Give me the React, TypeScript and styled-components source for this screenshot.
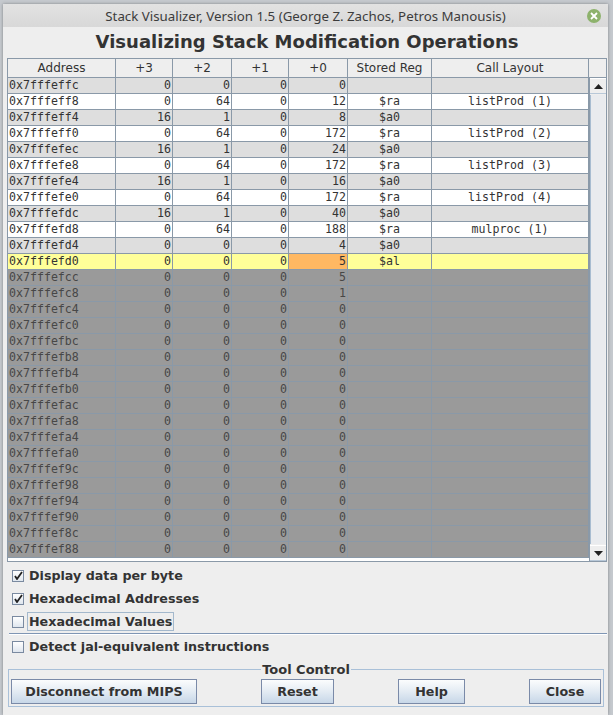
import React, { FC } from "react";
import styled, { createGlobalStyle, css } from "styled-components";

const GlobalStyle = createGlobalStyle`
  html, body {
    margin: 0;
    padding: 0;
    background: #c5c9ce;
    font-family: "DejaVu Sans", sans-serif;
  }
`;

type RowKind = "light" | "white" | "current" | "free";

interface StackRow {
  addr: string;
  bytes: number[];
  reg: string;
  call: string;
  kind: RowKind;
}

const filled: [number[], string, string][] = [
  [[0, 0, 0, 0], "", ""],
  [[0, 64, 0, 12], "$ra", "listProd (1)"],
  [[16, 1, 0, 8], "$a0", ""],
  [[0, 64, 0, 172], "$ra", "listProd (2)"],
  [[16, 1, 0, 24], "$a0", ""],
  [[0, 64, 0, 172], "$ra", "listProd (3)"],
  [[16, 1, 0, 16], "$a0", ""],
  [[0, 64, 0, 172], "$ra", "listProd (4)"],
  [[16, 1, 0, 40], "$a0", ""],
  [[0, 64, 0, 188], "$ra", "mulproc (1)"],
  [[0, 0, 0, 4], "$a0", ""],
  [[0, 0, 0, 5], "$al", ""],
  [[0, 0, 0, 5], "", ""],
  [[0, 0, 0, 1], "", ""],
];

const rows: StackRow[] = Array.from({ length: 30 }, (_, i) => {
  const addr = "0x" + (0x7fffeffc - i * 4).toString(16);
  const f = filled[i];
  let kind: RowKind = "free";
  if (i < 11) kind = i % 2 === 0 ? "light" : "white";
  else if (i === 11) kind = "current";
  return {
    addr,
    bytes: f ? f[0] : [0, 0, 0, 0],
    reg: f ? f[1] : "",
    call: f ? f[2] : "",
    kind,
  };
});

const rowBg: Record<RowKind, string> = {
  light: "#dedede",
  white: "#ffffff",
  current: "#ffff99",
  free: "#9a9a9a",
};

const COLS = "108px 57px 59px 57px 59px 84px 157px";
const GRID = "#8a99a8";

const Window = styled.div`
  margin: 4px 5px 0 3px;
  height: 711px;
  background: #eeeeee;
  box-shadow: 0 0 3px rgba(0, 0, 0, 0.35);
  display: flex;
  flex-direction: column;
`;

const TitleBar = styled.div`
  height: 23px;
  display: grid;
  grid-template-columns: 30px 1fr 30px;
  align-items: center;
  background: linear-gradient(#e2e2e2, #d8d8d8);
  font-family: "Noto Sans", sans-serif;
  font-size: 13.3px;
  color: #3c3c3c;
`;

const TitleText = styled.div`
  text-align: center;
  grid-column: 2;
`;

const CloseDot = styled.div`
  width: 14px;
  height: 14px;
  border-radius: 50%;
  background: #8db26c;
  color: #fff;
  display: flex;
  align-items: center;
  justify-content: center;
  justify-self: end;
  margin-right: 7px;
`;

const Content = styled.div`
  padding: 0 1px 0 4px;
  display: flex;
  flex-direction: column;
`;

const Heading = styled.h1`
  margin: 0;
  height: 31px;
  line-height: 30px;
  text-align: center;
  font-size: 18px;
  font-weight: bold;
  color: #333333;
`;

const ScrollPane = styled.div`
  border: 1px solid ${GRID};
  width: 598px;
  background: #ffffff;
`;

const HeaderRow = styled.div`
  display: grid;
  grid-template-columns: ${COLS} 17px;
  height: 19px;
  background: #eeeeee;
`;

const HeaderCell = styled.div`
  box-sizing: border-box;
  border-right: 1px solid ${GRID};
  border-bottom: 1px solid ${GRID};
  font-size: 12px;
  color: #333;
  text-align: center;
  line-height: 18px;
`;

const Corner = styled.div`
  box-sizing: border-box;
  border-bottom: 1px solid ${GRID};
  background: #eeeeee;
`;

const Body = styled.div`
  display: flex;
  height: 483px;
`;

const Rows = styled.div`
  width: 581px;
  background: #ffffff;
`;

const Row = styled.div<{ $kind: RowKind }>`
  display: grid;
  grid-template-columns: ${COLS};
  height: 16px;
  background: ${(p) => rowBg[p.$kind]};
  color: ${(p) => (p.$kind === "free" ? "#474747" : "#333333")};
`;

const Cell = styled.div<{ $align: "left" | "right" | "center"; $hot?: boolean }>`
  box-sizing: border-box;
  border-right: 1px solid ${GRID};
  border-bottom: 1px solid ${GRID};
  font-family: "DejaVu Sans Mono", monospace;
  font-size: 11.6px;
  line-height: 15px;
  white-space: pre;
  overflow: hidden;
  text-align: ${(p) => p.$align};
  padding: ${(p) => (p.$align === "left" ? "0 0 0 1px" : p.$align === "right" ? "0 1px 0 0" : "0")};
  ${(p) =>
    p.$hot &&
    css`
      background: #ffb862;
    `}
`;

const ScrollBar = styled.div`
  width: 17px;
  box-sizing: border-box;
  border-left: 1px solid ${GRID};
  background: #eeeeee;
  display: flex;
  flex-direction: column;
`;

const ArrowButton = styled.div`
  height: 16px;
  box-sizing: border-box;
  border-top: 1px solid #ffffff;
  border-bottom: 1px solid #b8c8d8;
  display: flex;
  align-items: center;
  justify-content: center;
  background: #eeeeee;
`;

const Thumb = styled.div`
  flex: 1;
  box-sizing: border-box;
  margin: 1px 1px 1px 0;
  border-left: 1px solid #a8bcd0;
  background: #e9ebee;
`;

const Options = styled.div`
  display: flex;
  flex-direction: column;
  padding-top: 2px;
`;

const CheckRow = styled.label`
  height: 23px;
  display: flex;
  align-items: center;
  gap: 3px;
  padding-left: 5px;
  font-size: 12.7px;
  font-weight: bold;
  color: #333333;
`;

const Box = styled.span`
  width: 12px;
  height: 12px;
  box-sizing: border-box;
  border: 1px solid #7a8aa0;
  background: linear-gradient(#ffffff, #dfe6ee);
  display: flex;
  align-items: center;
  justify-content: center;
`;

const LabelText = styled.span<{ $focus?: boolean }>`
  padding: 1px 1px;
  border: 1px solid ${(p) => (p.$focus ? "#a3b8cc" : "transparent")};
`;

const Separator = styled.div`
  height: 1px;
  margin: 0 0 0 2px;
  background: #7f96b4;
  border-bottom: 1px solid #ffffff;
`;

const ToolBox = styled.fieldset`
  margin: 5px 3px 0 1px;
  padding: 2px 2px 2px 2px;
  border: 1px solid #a9c0d8;
  display: flex;
  justify-content: space-between;
  & legend {
    margin: 0 auto;
    padding: 0 1px;
    font-size: 13px;
    font-weight: bold;
    color: #333333;
    line-height: 13px;
  }
`;

const Buttons = styled.div`
  display: flex;
  justify-content: space-between;
  width: 100%;
  padding-top: 1px;
`;

const ToolButton = styled.button<{ $w: number }>`
  width: ${(p) => p.$w}px;
  height: 25px;
  border: 1px solid #7a8aa8;
  border-radius: 0;
  background: linear-gradient(#fbfcfd 0%, #e3ebf3 50%, #c7d7e8 100%);
  font-family: "DejaVu Sans", sans-serif;
  font-size: 12.7px;
  font-weight: bold;
  color: #333333;
  padding: 0;
`;

const Check: FC = () => (
  <svg width="9" height="9" viewBox="0 0 9 9">
    <path d="M1 5 L3 8 L8 1" stroke="#222" strokeWidth="1.8" fill="none" />
  </svg>
);

const Triangle: FC<{ down?: boolean }> = ({ down }) => (
  <svg width="9" height="5" viewBox="0 0 9 5">
    <path d={down ? "M0 0 H9 L4.5 5 Z" : "M0 5 H9 L4.5 0 Z"} fill="#222" />
  </svg>
);

const headers = ["Address", "+3", "+2", "+1", "+0", "Stored Reg", "Call Layout"];

const options: { label: string; checked: boolean; focus?: boolean }[] = [
  { label: "Display data per byte", checked: true },
  { label: "Hexadecimal Addresses", checked: true },
  { label: "Hexadecimal Values", checked: false, focus: true },
];

const App: FC = () => (
  <>
    <GlobalStyle />
    <Window>
      <TitleBar>
        <TitleText>Stack Visualizer, Version 1.5 (George Z. Zachos, Petros Manousis)</TitleText>
        <CloseDot>
          <svg width="8" height="8" viewBox="0 0 8 8">
            <path d="M1 1 L7 7 M7 1 L1 7" stroke="#fff" strokeWidth="1.8" />
          </svg>
        </CloseDot>
      </TitleBar>
      <Content>
        <Heading>Visualizing Stack Modification Operations</Heading>
        <ScrollPane>
          <HeaderRow>
            {headers.map((h) => (
              <HeaderCell key={h}>{h}</HeaderCell>
            ))}
            <Corner />
          </HeaderRow>
          <Body>
            <Rows>
              {rows.map((r) => (
                <Row key={r.addr} $kind={r.kind}>
                  <Cell $align="left">{r.addr}</Cell>
                  {r.bytes.map((b, j) => (
                    <Cell key={j} $align="right" $hot={r.kind === "current" && j === 3}>
                      {b}
                    </Cell>
                  ))}
                  <Cell $align="center">{r.reg}</Cell>
                  <Cell $align="center">{r.call}</Cell>
                </Row>
              ))}
            </Rows>
            <ScrollBar>
              <ArrowButton>
                <Triangle />
              </ArrowButton>
              <Thumb />
              <ArrowButton>
                <Triangle down />
              </ArrowButton>
            </ScrollBar>
          </Body>
        </ScrollPane>
        <Options>
          {options.map((o) => (
            <CheckRow key={o.label}>
              <Box>{o.checked && <Check />}</Box>
              <LabelText $focus={o.focus}>{o.label}</LabelText>
            </CheckRow>
          ))}
          <Separator />
          <CheckRow>
            <Box />
            <LabelText>Detect jal-equivalent instructions</LabelText>
          </CheckRow>
        </Options>
        <ToolBox>
          <legend>Tool Control</legend>
          <Buttons>
            <ToolButton $w={186}>Disconnect from MIPS</ToolButton>
            <ToolButton $w={73}>Reset</ToolButton>
            <ToolButton $w={67}>Help</ToolButton>
            <ToolButton $w={72}>Close</ToolButton>
          </Buttons>
        </ToolBox>
      </Content>
    </Window>
  </>
);

export default App;
